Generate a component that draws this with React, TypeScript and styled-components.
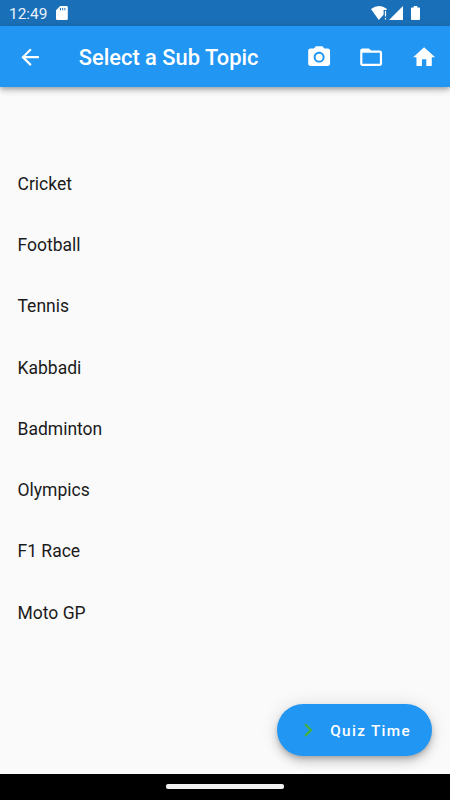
import React from "react";
import styled, { createGlobalStyle } from "styled-components";

const GlobalStyle = createGlobalStyle`
  *, *::before, *::after { box-sizing: border-box; }
  html, body { margin: 0; padding: 0; overflow: hidden; }
  body { font-family: Roboto, sans-serif; background: #fafafa; }
`;

const Screen = styled.div`
  position: relative;
  display: flex;
  flex-direction: column;
  width: 450px;
  height: 800px;
  overflow: hidden;
  background: #fafafa;
`;

const StatusBar = styled.header`
  flex: none;
  display: flex;
  align-items: center;
  height: 26px;
  padding: 0 30px 0 9px;
  background: #1a70b8;
  color: #fff;
`;

const Clock = styled.time`
  padding-top: 2px;
  font-size: 15.4px;
  line-height: 20px;
  color: #e9f2fa;
`;

const StatusIcon = styled.svg<{ $gap?: string }>`
  display: block;
  flex: none;
  margin-left: ${(p) => p.$gap ?? "0"};
  fill: #fff;
`;

const AppBar = styled.nav`
  flex: none;
  display: flex;
  align-items: center;
  height: 61.4px;
  padding: 0.6px 0 0 17px;
  background: #2196f3;
  color: #fff;
  z-index: 1;
  box-shadow: 0 2px 4px -1px rgba(0, 0, 0, 0.2), 0 4px 5px rgba(0, 0, 0, 0.14),
    0 1px 10px rgba(0, 0, 0, 0.12);
`;

const Title = styled.h1`
  flex: 1;
  margin: 0 0 0 35.5px;
  padding-top: 2px;
  font-size: 21.875px;
  font-weight: 500;
  line-height: 26px;
  white-space: nowrap;
`;

const IconButton = styled.button<{ $width?: number }>`
  display: flex;
  align-items: center;
  justify-content: center;
  width: ${(p) => p.$width ?? 52.5}px;
  height: 52.5px;
  padding: 0;
  border: 0;
  background: none;
  color: inherit;
`;

const Glyph = styled.svg`
  display: block;
  flex: none;
  width: 26.25px;
  height: 26.25px;
  fill: currentColor;
`;

const TopicList = styled.ul`
  flex: 1;
  margin: 0;
  padding: 65.75px 17.5px 0;
  list-style: none;
`;

const Topic = styled.li`
  display: flex;
  align-items: center;
  height: 61.25px;
  font-size: 17.5px;
  color: #1a1a1a;
`;

const QuizButton = styled.button`
  position: absolute;
  right: 17.7px;
  bottom: 44px;
  display: flex;
  align-items: center;
  gap: 9.5px;
  width: 155.1px;
  height: 52.5px;
  padding: 0 0 0 17.3px;
  border: 0;
  border-radius: 27px;
  background: #2196f3;
  color: #46b03a;
  box-shadow: 0 3px 5px -1px rgba(0, 0, 0, 0.2), 0 6px 10px rgba(0, 0, 0, 0.14),
    0 1px 18px rgba(0, 0, 0, 0.12);
`;

const QuizLabel = styled.span`
  padding-top: 1.5px;
  font: 500 15.3px/20px Roboto, sans-serif;
  letter-spacing: 1.31px;
  color: #fff;
  white-space: nowrap;
`;

const NavigationBar = styled.footer`
  flex: none;
  display: flex;
  justify-content: center;
  height: 26px;
  padding-top: 10px;
  background: #000;
`;

const HomeHandle = styled.div`
  width: 118px;
  height: 5px;
  border-radius: 2px;
  background: #f2f2f2;
`;

const topics = [
  "Cricket",
  "Football",
  "Tennis",
  "Kabbadi",
  "Badminton",
  "Olympics",
  "F1 Race",
  "Moto GP",
];

const Icon = ({ d }: { d: string }) => (
  <Glyph viewBox="0 0 24 24" aria-hidden="true">
    <path d={d} />
  </Glyph>
);

const paths = {
  back: "M20 11H7.83l5.59-5.59L12 4l-8 8 8 8 1.41-1.41L7.83 13H20v-2z",
  camera:
    "M15.2 12a3.2 3.2 0 1 1-6.4 0 3.2 3.2 0 0 1 6.4 0zM9 2 7.17 4H4c-1.1 0-2 .9-2 2v12c0 1.1.9 2 2 2h16c1.1 0 2-.9 2-2V6c0-1.1-.9-2-2-2h-3.17L15 2H9zm3 15c-2.76 0-5-2.24-5-5s2.24-5 5-5 5 2.24 5 5-2.24 5-5 5z",
  folder:
    "M20 6h-8l-2-2H4c-1.1 0-1.99.9-1.99 2L2 18c0 1.1.9 2 2 2h16c1.1 0 2-.9 2-2V8c0-1.1-.9-2-2-2zm0 12H4V8h16v10z",
  home: "M10 20v-6h4v6h5v-8h3L12 3 2 12h3v8z",
  chevron: "M10 6L8.59 7.41 13.17 12l-4.58 4.59L10 18l6-6z",
};

export default function App() {
  return (
    <Screen>
      <GlobalStyle />
      <StatusBar>
        <Clock>12:49</Clock>
        <StatusIcon $gap="8.6px" width="12" height="14" viewBox="0 0 12 14">
          <path
            fillRule="evenodd"
            d="M4.2 0H10.6Q11.8 0 11.8 1.2V12.8Q11.8 14 10.6 14H1.2Q0 14 0 12.8V4.2ZM4 2V4.2H5V2ZM6.2 2V4.2H7.2V2ZM8.4 2V4.2H9.4V2Z"
          />
        </StatusIcon>
        <StatusIcon $gap="auto" width="17" height="14" viewBox="0 0 17 14">
          <path d="M0 3Q8-3 16 3L15.4 4H12.6V8.8L7.8 14Z" />
          <path d="M13.9 5H15.1V10.5H13.9ZM13.9 12H15.1V13.6H13.9Z" />
        </StatusIcon>
        <StatusIcon $gap="1px" width="14" height="14" viewBox="0 0 14 14">
          <path d="M14 0V14H0Z" />
        </StatusIcon>
        <StatusIcon $gap="8px" width="9" height="14" viewBox="0 0 9 14">
          <path d="M2.7 0H6.3V1.4H8Q9 1.4 9 2.4V13Q9 14 8 14H1Q0 14 0 13V2.4Q0 1.4 1 1.4H2.7Z" />
        </StatusIcon>
      </StatusBar>
      <AppBar>
        <IconButton $width={26.25} aria-label="Back">
          <Icon d={paths.back} />
        </IconButton>
        <Title>Select a Sub Topic</Title>
        <IconButton aria-label="Camera">
          <Icon d={paths.camera} />
        </IconButton>
        <IconButton aria-label="Files">
          <Icon d={paths.folder} />
        </IconButton>
        <IconButton aria-label="Home">
          <Icon d={paths.home} />
        </IconButton>
      </AppBar>
      <TopicList>
        {topics.map((topic) => (
          <Topic key={topic}>{topic}</Topic>
        ))}
      </TopicList>
      <QuizButton>
        <Icon d={paths.chevron} />
        <QuizLabel>Quiz Time</QuizLabel>
      </QuizButton>
      <NavigationBar>
        <HomeHandle />
      </NavigationBar>
    </Screen>
  );
}
